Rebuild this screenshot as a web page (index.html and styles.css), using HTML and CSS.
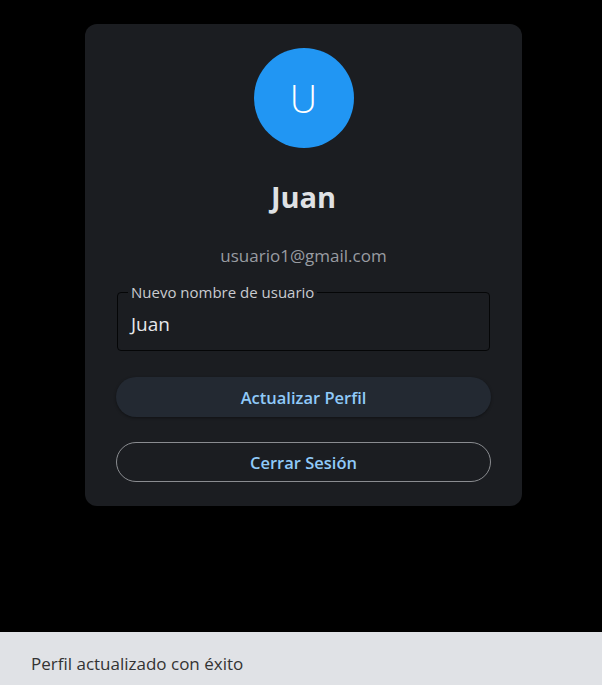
FILE: index.html
```html
<!DOCTYPE html>
<html lang="es">
<head>
<meta charset="utf-8">
<link rel="stylesheet" href="styles.css">
</head>
<body>
<main class="page">
  <section class="card">
    <div class="avatar">U</div>
    <h1 class="name">Juan</h1>
    <p class="email">usuario1@gmail.com</p>
    <fieldset class="field">
      <legend class="field-label">Nuevo nombre de usuario</legend>
      <div class="field-value">Juan</div>
    </fieldset>
    <button class="btn btn-filled">Actualizar Perfil</button>
    <button class="btn btn-outline">Cerrar Sesión</button>
  </section>
</main>
<div class="snackbar">Perfil actualizado con éxito</div>
</body>
</html>
```
FILE: styles.css
```css
* { box-sizing: border-box; }
html, body { height: 100%; }
body {
  margin: 0;
  background: #000;
  font-family: "Open Sans", "Noto Sans", sans-serif;
  color: #e3e4e6;
  position: relative;
  overflow: hidden;
}
.page {
  display: flex;
  justify-content: center;
  padding-top: 24px;
  padding-left: 5px;
}
.card {
  width: 437px;
  background: #1b1d21;
  border-radius: 12px;
  padding: 24px 32px 25px;
  display: flex;
  flex-direction: column;
  align-items: center;
}
.avatar {
  width: 100px;
  height: 100px;
  border-radius: 50%;
  background: #2196f3;
  color: #fff;
  font-size: 38px;
  font-weight: 300;
  display: flex;
  align-items: center;
  justify-content: center;
}
.name {
  margin: 31px 0 0;
  font-size: 29px;
  line-height: 36px;
  font-weight: 700;
  color: #dfe1e4;
}
.email {
  margin: 29px 0 0;
  font-size: 17px;
  line-height: 24px;
  color: #999ca2;
}
.field {
  align-self: stretch;
  margin: 16px 0 0;
  padding: 0 13px 0 13px;
  border: 1px solid #050607;
  border-radius: 4px;
  height: 67px;
  min-width: 0;
}
.field-label {
  padding: 0 3px;
  margin-left: -3px;
  font-size: 15px;
  line-height: 16px;
  color: #c9cbd0;
}
.field-value {
  padding-top: 10px;
  font-size: 19px;
  line-height: 28px;
  color: #e6e7ea;
}
.btn {
  align-self: stretch;
  height: 40px;
  margin-left: -1px;
  margin-right: -1px;
  border-radius: 20px;
  font-family: inherit;
  font-size: 16.5px;
  font-weight: 600;
  color: #90caf9;
  cursor: pointer;
}
.btn-filled {
  margin-top: 26px;
  border: none;
  background: #232932;
  box-shadow: 0 1px 3px rgba(0,0,0,0.4);
}
.btn-outline {
  margin-top: 25px;
  margin-bottom: -1px;
  background: transparent;
  border: 1px solid #8a8c90;
}
.snackbar {
  position: absolute;
  left: 0;
  right: 0;
  bottom: 0;
  height: 53px;
  background: #e0e2e6;
  color: #333;
  font-size: 17px;
  display: flex;
  align-items: center;
  padding: 10px 0 0 31px;
}
```
